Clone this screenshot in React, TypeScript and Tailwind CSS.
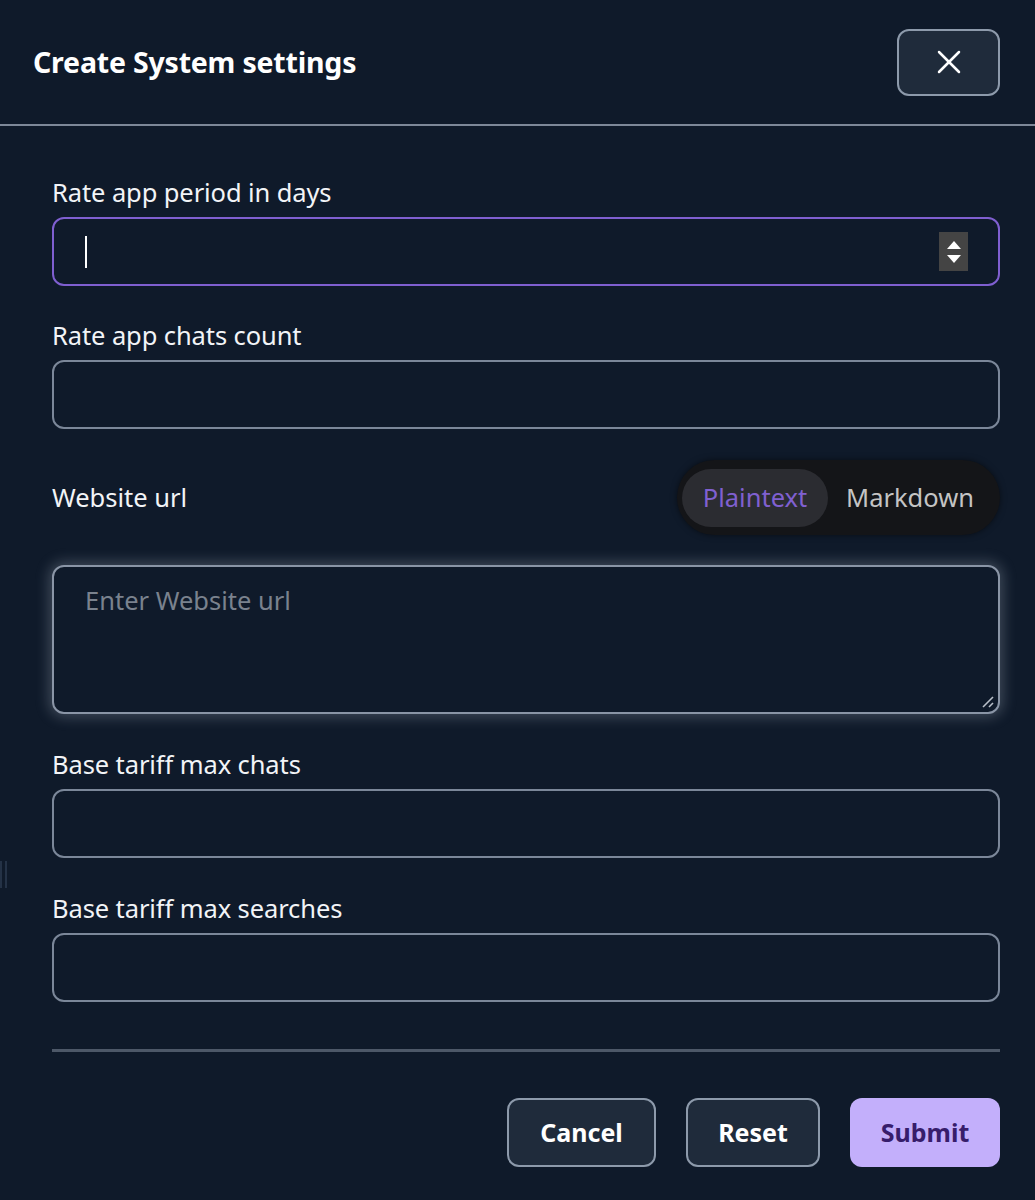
import { X } from "lucide-react";

const font = { fontFamily: "'Noto Sans', 'Open Sans', sans-serif" };

const Field = ({ label, children }: { label: string; children: React.ReactNode }) => (
  <div className="flex flex-col">
    <label className="text-[25.5px] leading-[32px] text-[#f2f4f7] mb-[9px] tracking-[-0.1px]">{label}</label>
    {children}
  </div>
);

const TextInput = () => (
  <div className="h-[69px] rounded-[12px] border-2 border-[#7b8799] bg-[#0f1a2a]" />
);

export default function App() {
  return (
    <div className="w-[1035px] h-[1200px] bg-[#0f1a2a] relative overflow-hidden" style={font}>
      {/* header */}
      <div className="h-[124px] flex items-center justify-between pl-[33px] pr-[35px]">
        <h1 className="text-[28.5px] font-bold text-white tracking-[-0.2px]">Create System settings</h1>
        <button className="w-[103px] h-[67px] rounded-[12px] border-2 border-[#8d9aab] bg-[#1f2b3b] flex items-center justify-center">
          <X size={40} strokeWidth={1.5} color="#ffffff" />
        </button>
      </div>
      <div className="h-[2px] bg-[#7d8898]" />

      {/* left edge artefact */}
      <div className="absolute left-[0px] top-[861px] flex gap-[3px]">
        <div className="w-[2px] h-[27px] bg-[#243246]" />
        <div className="w-[2px] h-[27px] bg-[#243246]" />
      </div>

      <div className="pl-[52px] pr-[35px] pt-[50px] flex flex-col">
        <Field label="Rate app period in days">
          <div className="h-[69px] rounded-[12px] border-2 border-[#7f5fd0] bg-[#0f1a2a] flex items-center justify-between pl-[31px] pr-[30px]">
            <div className="w-[2px] h-[32px] bg-white" />
            <div className="w-[29px] h-[39px] bg-[#444444] flex flex-col items-center justify-center gap-[6px]">
              <div className="w-0 h-0 border-l-[7px] border-r-[7px] border-b-[8px] border-l-transparent border-r-transparent border-b-white" />
              <div className="w-0 h-0 border-l-[7px] border-r-[7px] border-t-[8px] border-l-transparent border-r-transparent border-t-white" />
            </div>
          </div>
        </Field>

        <div className="mt-[33px]">
          <Field label="Rate app chats count">
            <TextInput />
          </Field>
        </div>

        <div className="mt-[31px] flex items-center justify-between">
          <span className="text-[25.5px] text-[#f2f4f7]">Website url</span>
          <div className="h-[75px] w-[323px] rounded-full bg-[#141518] flex items-center pl-[5px] pr-[26px] justify-between shadow-[0_0_6px_rgba(0,0,0,0.5)]">
            <div className="h-[58px] w-[146px] rounded-full bg-[#2b2c31] flex items-center justify-center text-[25.5px] text-[#8060d0]">
              Plaintext
            </div>
            <span className="text-[25.5px] text-[#c4c4c4]">Markdown</span>
          </div>
        </div>

        <div className="mt-[30px] h-[149px] rounded-[12px] border-2 border-[#8a95a6] bg-[#0f1a2a] shadow-[0_0_14px_3px_rgba(190,200,215,0.28)] relative pl-[31px] pt-[14px]">
          <span className="text-[25.5px] text-[#7a828e]">Enter Website url</span>
          <svg className="absolute right-[3px] bottom-[3px]" width="14" height="14" viewBox="0 0 14 14">
            <line x1="2" y1="12" x2="12" y2="2" stroke="#b8bfc9" strokeWidth="1.6" />
            <line x1="8" y1="12" x2="12" y2="8" stroke="#b8bfc9" strokeWidth="1.6" />
          </svg>
        </div>

        <div className="mt-[34px]">
          <Field label="Base tariff max chats">
            <TextInput />
          </Field>
        </div>

        <div className="mt-[34px]">
          <Field label="Base tariff max searches">
            <TextInput />
          </Field>
        </div>

        <div className="mt-[47px] h-[3px] bg-[#4d5868]" />

        <div className="mt-[46px] flex justify-end gap-[30px]">
          <button className="w-[149px] h-[69px] rounded-[12px] border-2 border-[#8d9aab] bg-[#1f2b3b] text-white text-[25px] font-bold">
            Cancel
          </button>
          <button className="w-[134px] h-[69px] rounded-[12px] border-2 border-[#8d9aab] bg-[#1f2b3b] text-white text-[25px] font-bold">
            Reset
          </button>
          <button className="w-[150px] h-[69px] rounded-[12px] bg-[#c3affb] text-[#371d6b] text-[25px] font-bold">
            Submit
          </button>
        </div>
      </div>
    </div>
  );
}
